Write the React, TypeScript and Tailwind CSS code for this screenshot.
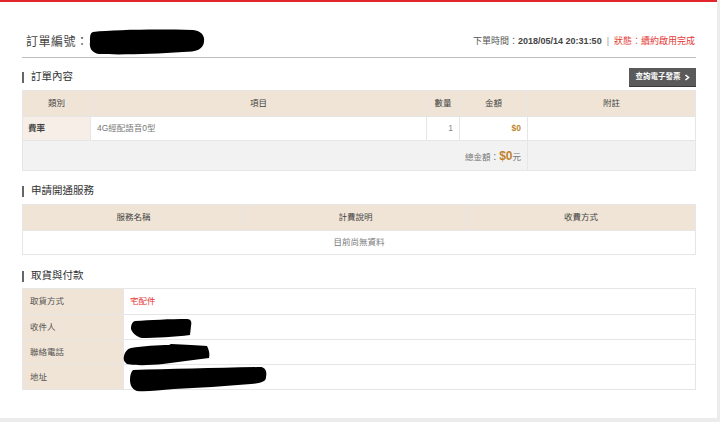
import React from "react";

const FONT = "font-['Liberation_Sans','Noto_Sans_CJK_TC',sans-serif]";

function Blob({ w, h, d, className }: { w: number; h: number; d: string; className?: string }) {
  return (
    <svg width={w} height={h} viewBox={`0 0 ${w} ${h}`} className={className}>
      <path d={d} fill="#000" />
    </svg>
  );
}

function SectionTitle({ title, children, className }: { title: string; children?: React.ReactNode; className?: string }) {
  return (
    <div className={`flex h-[18px] items-center justify-between ${className ?? ""}`}>
      <div className="flex items-center">
        <span className="h-[11px] w-[2px] bg-[#666]" />
        <span className="ml-[7px] text-[10.5px] text-[#333]">{title}</span>
      </div>
      {children}
    </div>
  );
}

export default function App() {
  const th = "border border-[#e6e6e6] bg-[#f0e4d6] text-[8.5px] font-normal text-[#444] text-center";
  const td = "border border-[#e6e6e6] text-[8.5px]";
  return (
    <div className={`flex h-[422px] w-[720px] bg-[#ececec] ${FONT}`}>
      <div className="h-[418px] w-[717px] border-t-2 border-[#e3262b] bg-white pl-[22px] pr-[21px]">
        {/* header */}
        <div className="flex h-[56px] items-center justify-between border-b border-[#bdbdbd] pt-[25px]">
          <div className="flex items-center pl-[4px]">
            <span className="text-[12px] tracking-[0.5px] text-[#444]">訂單編號：</span>
            <Blob
              w={116}
              h={26}
              className="ml-0"
              d="M4 3 C 25 1, 60 0, 104 1 C 112 2, 116 6, 115 13 C 114 20, 108 23, 94 23 C 64 25, 32 26, 10 25 C 3 24, 0 19, 1 13 C 1 7, 1 4, 4 3 Z"
            />
          </div>
          <div className="flex items-center pr-[1px] text-[9px]">
            <span className="text-[#555]">下單時間：</span>
            <span className="font-bold text-[#444]">2018/05/14 20:31:50</span>
            <span className="mx-[5px] text-[#999]">|</span>
            <span className="text-[#e53935]">狀態：續約啟用完成</span>
          </div>
        </div>

        {/* 訂單內容 */}
        <SectionTitle title="訂單內容" className="mt-[10px]">
          <button className="flex h-[18px] w-[67px] items-center justify-center gap-[3px] bg-[#5a5a5a] text-[7.5px] font-bold text-white shadow-[0_1px_0_#3a3a3a]">
            <span>查詢電子發票</span>
            <svg width="6" height="7" viewBox="0 0 6 7">
              <path d="M1.5 1 L4.5 3.5 L1.5 6" stroke="#fff" strokeWidth="1.6" fill="none" />
            </svg>
          </button>
        </SectionTitle>
        <table className="mt-[4px] w-[674px] table-fixed border-collapse">
          <colgroup>
            <col className="w-[68px]" />
            <col className="w-[336px]" />
            <col className="w-[33px]" />
            <col className="w-[68px]" />
            <col />
          </colgroup>
          <thead>
            <tr className="h-[26px]">
              <th className={th}>類別</th>
              <th className={th}>項目</th>
              <th className={th}>數量</th>
              <th className={th}>金額</th>
              <th className={th}>附註</th>
            </tr>
          </thead>
          <tbody>
            <tr className="h-[24px]">
              <td className={`${td} bg-[#f7efe7] pl-[5px] font-bold text-[#444]`}>費率</td>
              <td className={`${td} pl-[6px] text-[#777]`}>4G經配語音0型</td>
              <td className={`${td} pr-[6px] text-right text-[#888]`}>1</td>
              <td className={`${td} pr-[6px] text-right font-bold text-[#c0832c]`}>$0</td>
              <td className={td}></td>
            </tr>
            <tr className="h-[30px]">
              <td colSpan={4} className={`${td} bg-[#f2f2f2] pr-[6px] text-right text-[#777]`}>
                總金額：<span className="text-[12px] font-bold text-[#c0832c]">$0</span>元
              </td>
              <td className={`${td} bg-[#f2f2f2]`}></td>
            </tr>
          </tbody>
        </table>

        {/* 申請開通服務 */}
        <SectionTitle title="申請開通服務" className="mt-[11px]" />
        <table className="mt-[4px] w-[674px] table-fixed border-collapse">
          <colgroup>
            <col className="w-[222px]" />
            <col className="w-[222px]" />
            <col />
          </colgroup>
          <thead>
            <tr className="h-[26px]">
              <th className={th}>服務名稱</th>
              <th className={th}>計費說明</th>
              <th className={th}>收費方式</th>
            </tr>
          </thead>
          <tbody>
            <tr className="h-[24px]">
              <td colSpan={3} className={`${td} text-center text-[#777]`}>目前尚無資料</td>
            </tr>
          </tbody>
        </table>

        {/* 取貨與付款 */}
        <SectionTitle title="取貨與付款" className="mt-[12px]" />
        <table className="mt-[3px] w-[674px] table-fixed border-collapse">
          <colgroup>
            <col className="w-[101px]" />
            <col />
          </colgroup>
          <tbody>
            <tr className="h-[26px]">
              <td className={`${td} bg-[#f0e4d6] pl-[7px] text-[#555]`}>取貨方式</td>
              <td className={`${td} pl-[6px] text-[#e53935]`}>宅配件</td>
            </tr>
            <tr className="h-[25px]">
              <td className={`${td} bg-[#f0e4d6] pl-[7px] text-[#555]`}>收件人</td>
              <td className={`${td} relative`}>
                <Blob
                  w={62}
                  h={20}
                  className="absolute left-[6px] top-[3px]"
                  d="M5 3 C 20 2, 40 1, 57 1 C 61 1, 62 4, 61 8 L 60 17 C 45 19, 25 20, 12 20 C 6 19, 2 14, 1 11 C 1 7, 2 4, 5 3 Z"
                />
              </td>
            </tr>
            <tr className="h-[25px]">
              <td className={`${td} bg-[#f0e4d6] pl-[7px] text-[#555]`}>聯絡電話</td>
              <td className={`${td} relative`}>
                <Blob
                  w={87}
                  h={23}
                  className="absolute left-[-1px] top-[4px]"
                  d="M8 4 C 20 2, 35 1, 46 1 L 48 0 C 62 1, 75 1, 84 2 C 86 6, 87 10, 86 14 C 70 16, 55 18, 40 20 C 28 21, 15 22, 4 20 C 1 18, 0 15, 1 12 C 2 8, 4 5, 8 4 Z"
                />
              </td>
            </tr>
            <tr className="h-[25px]">
              <td className={`${td} bg-[#f0e4d6] pl-[7px] text-[#555]`}>地址</td>
              <td className={`${td} relative`}>
                <Blob
                  w={138}
                  h={25}
                  className="absolute left-[5px] top-[2px]"
                  d="M4 3 C 40 2, 90 1, 132 0 C 137 1, 138 5, 137 10 C 137 14, 134 16, 122 17 C 95 19, 70 21, 45 22 C 30 23, 18 25, 8 24 C 3 22, 1 18, 1 13 C 1 8, 2 5, 4 3 Z"
                />
              </td>
            </tr>
          </tbody>
        </table>
      </div>
    </div>
  );
}
